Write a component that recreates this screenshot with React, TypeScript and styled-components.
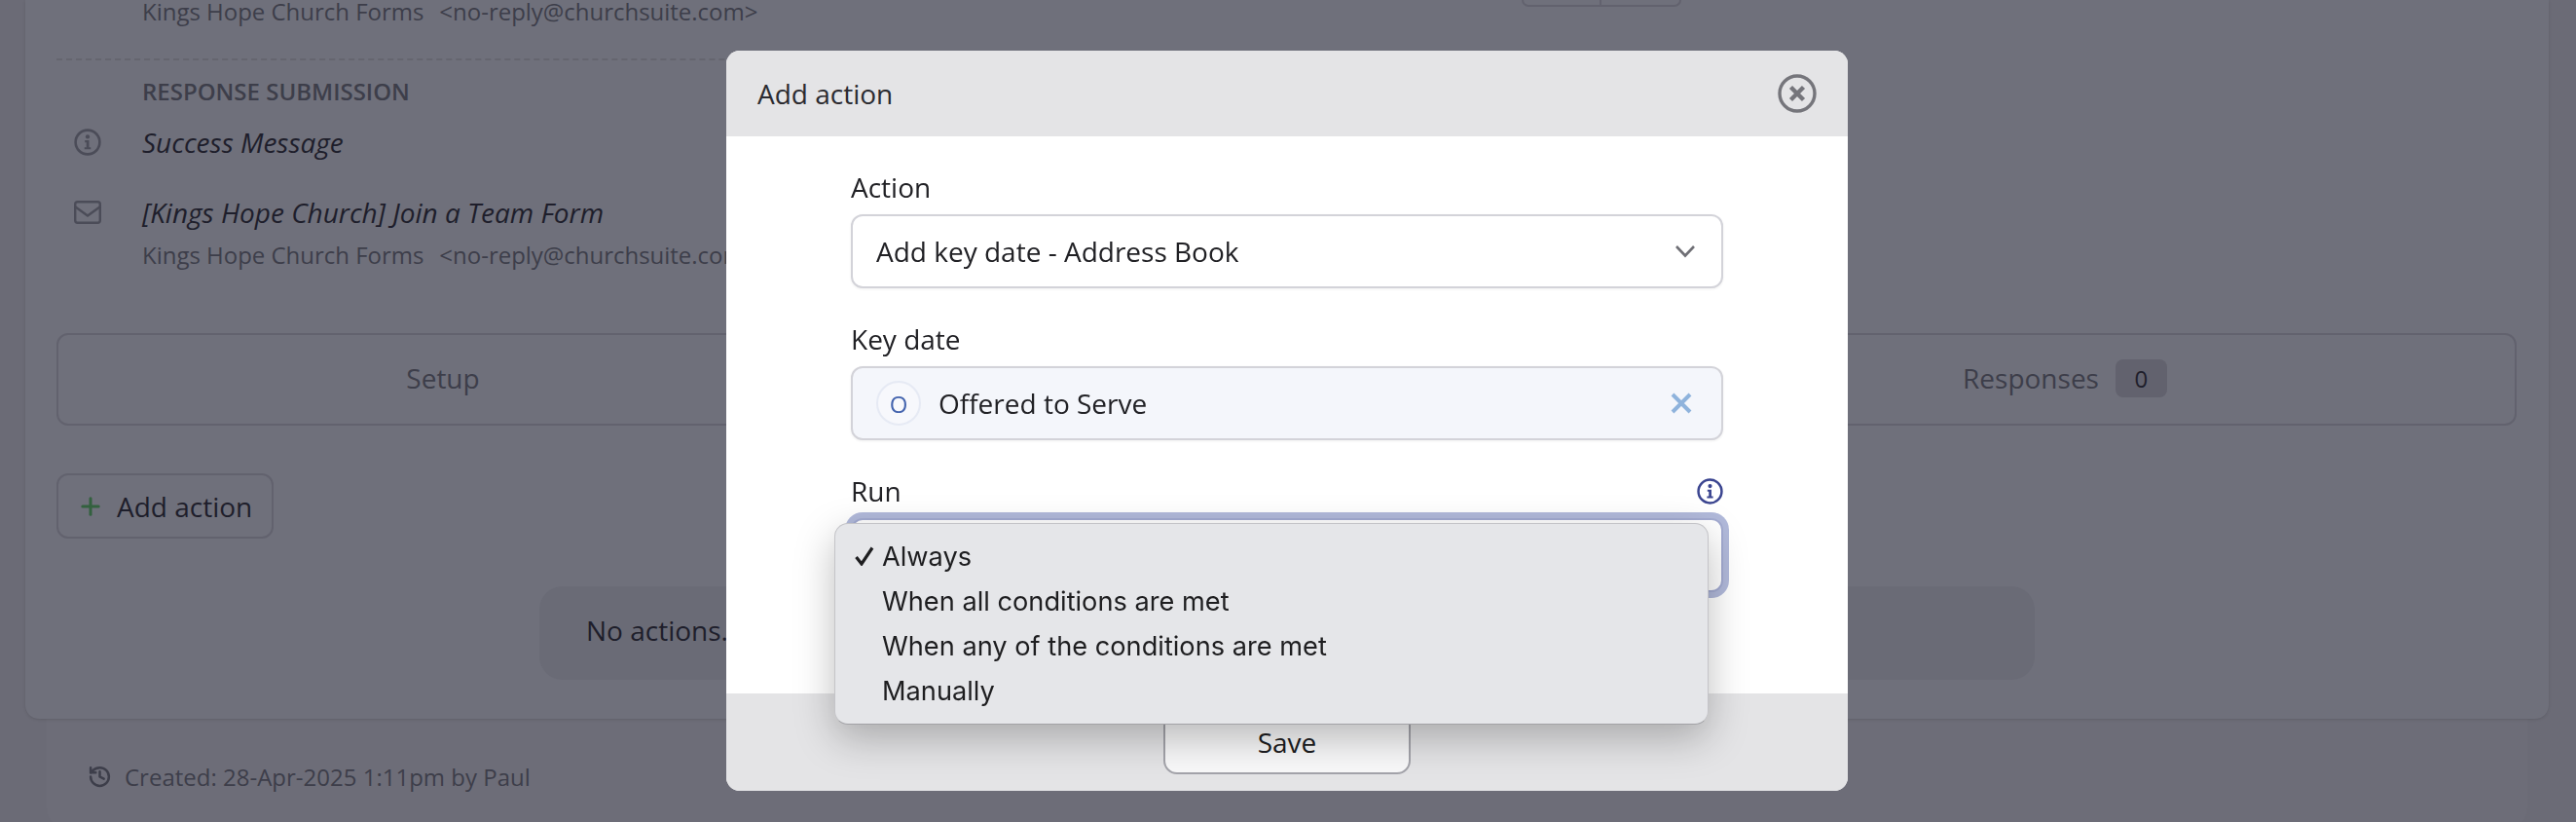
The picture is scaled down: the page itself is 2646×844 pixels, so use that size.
import React from 'react'
import styled, { createGlobalStyle } from 'styled-components'
import { History, Plus } from 'lucide-react'

const appFont = `'Open Sans', 'Noto Sans', sans-serif`
const ink = '#1e1e2b'
const inkMuted = '#3d3e4a'
const line = '#62626e'

const GlobalStyle = createGlobalStyle`
  html, body {
    margin: 0;
    height: 100%;
    overflow: hidden;
    background: #6b6b76;
    font-family: ${appFont};
  }
  * {
    box-sizing: border-box;
  }
`

const Page = styled.div`
  height: 844px;
  display: flex;
  flex-direction: column;
  overflow: hidden;
`

const Panel = styled.section`
  margin: 0 28px 0 26px;
  padding: 0 33px 40px 32px;
  background: #6f707b;
  border-radius: 0 0 14px 14px;
  box-shadow: 0 1px 3px rgba(0, 0, 0, 0.12);
  position: relative;
`

const TopRow = styled.div`
  display: flex;
  justify-content: space-between;
  padding-left: 88px;
`

const Sender = styled.div`
  font-size: 24px;
  line-height: 24px;
  color: ${inkMuted};
  white-space: nowrap;
  letter-spacing: -0.02px;
  span {
    margin-left: 16px;
  }
`

const ToggleGroup = styled.div`
  width: 164px;
  height: 7px;
  margin-right: 858px;
  display: flex;
  border: 2px solid ${line};
  border-top: 0;
  border-radius: 0 0 12px 12px;
  div:first-child {
    width: 80px;
    border-right: 2px solid ${line};
  }
`

const Divider = styled.hr`
  margin: 36px 1000px 0 0;
  border: 0;
  border-top: 2px dashed #65656f;
`

const Heading = styled.h4`
  margin: 16px 0 0 88px;
  font-size: 24px;
  line-height: 32px;
  font-weight: 600;
  color: ${inkMuted};
`

const DetailRow = styled.div<{ $top: number }>`
  margin-top: ${(p) => p.$top}px;
  display: flex;
  align-items: center;
  height: 40px;
  svg {
    margin-left: 18px;
    width: 28px;
    color: #4b4c58;
  }
`

const DetailTitle = styled.em`
  margin-left: 42px;
  font-size: 28px;
  line-height: 38px;
  color: ${ink};
`

const SubSender = styled(Sender)`
  margin: 6px 0 0 88px;
  line-height: 36px;
`

const Tabs = styled.div`
  margin-top: 62px;
  height: 95px;
  padding-bottom: 4px;
  display: grid;
  grid-template-columns: 790px 1fr 924px;
  align-items: center;
  border: 2px solid ${line};
  border-radius: 12px;
`

const Tab = styled.div`
  display: flex;
  justify-content: center;
  align-items: center;
  font-size: 28px;
  color: ${inkMuted};
`

const Count = styled.span`
  margin: 2px 0 0 17px;
  width: 53px;
  height: 39px;
  display: flex;
  align-items: center;
  justify-content: center;
  border-radius: 8px;
  background: #62626e;
  font-size: 24px;
  color: ${ink};
`

const AddButton = styled.div`
  margin-top: 49px;
  width: 223px;
  height: 67px;
  display: flex;
  align-items: center;
  gap: 13px;
  padding-left: 19px;
  border: 2px solid ${line};
  border-radius: 12px;
  font-size: 28px;
  color: ${ink};
  svg {
    color: #33613f;
  }
`

const EmptyNote = styled.div`
  margin: 49px 0 0 496px;
  width: 1536px;
  height: 96px;
  padding: 0 0 6px 48px;
  display: flex;
  align-items: center;
  border-radius: 24px;
  background: #6a6b76;
  font-size: 28px;
  color: ${ink};
`

const FooterPanel = styled.footer`
  margin: 0 50px 0 48px;
  flex: 1;
  min-height: 112px;
  padding: 44px 0 0 42px;
  display: flex;
  align-items: flex-start;
  gap: 13px;
  background: #6d6d78;
  border-radius: 0 0 20px 20px;
  font-size: 24px;
  line-height: 32px;
  color: ${inkMuted};
  svg {
    margin-top: 3px;
  }
`

const Modal = styled.div`
  position: fixed;
  left: 746px;
  top: 52px;
  width: 1152px;
  height: 760px;
  display: flex;
  flex-direction: column;
  background: #fff;
  border-radius: 14px;
`

const ModalHeader = styled.header`
  height: 88px;
  padding: 0 32px;
  display: flex;
  align-items: center;
  justify-content: space-between;
  background: #e4e4e6;
  border-radius: 14px 14px 0 0;
  font-size: 28px;
  color: #2b2b30;
`

const ModalBody = styled.div`
  flex: 1;
  padding: 34px 128px 0;
`

const Field = styled.div`
  margin-bottom: 34px;
`

const LabelRow = styled.div`
  height: 36px;
  margin-bottom: 10px;
  display: flex;
  align-items: center;
  justify-content: space-between;
  font-size: 28px;
  color: #212125;
`

const Control = styled.div<{ $tone?: 'selected' | 'focus' }>`
  position: relative;
  height: 76px;
  padding: 0 ${(p) => (p.$tone === 'selected' ? 30 : 26)}px 0 24px;
  display: flex;
  align-items: center;
  justify-content: space-between;
  background: ${(p) => (p.$tone === 'selected' ? '#f4f6fb' : '#fff')};
  border: 2px solid ${(p) => (p.$tone === 'focus' ? '#a3abd1' : '#d3d3d9')};
  border-radius: 12px;
  box-shadow: ${(p) =>
    p.$tone === 'focus'
      ? '0 0 0 6px #b1b9da'
      : '0 1px 3px rgba(0, 0, 0, 0.06)'};
  font-size: 28px;
  color: #212125;
`

const ChosenValue = styled.div`
  display: flex;
  align-items: center;
  gap: 18px;
`

const Avatar = styled.span`
  width: 46px;
  height: 46px;
  display: flex;
  align-items: center;
  justify-content: center;
  background: #f7f8fc;
  border: 2px solid #e6eaf4;
  border-radius: 50%;
  font-size: 24px;
  color: #4464ae;
`

const NativeMenu = styled.ul`
  position: absolute;
  z-index: 2;
  left: -19px;
  top: 3px;
  width: 898px;
  height: 207px;
  margin: 0;
  padding: 10px 0 0 20px;
  list-style: none;
  background: #e5e6e9;
  border: 1px solid #c4c4c8;
  border-bottom-color: #a2a2a6;
  border-radius: 14px;
  box-shadow: 0 14px 40px rgba(0, 0, 0, 0.26);
  font-family: Inter, 'Liberation Sans', sans-serif;
  font-size: 27.2px;
  color: #1e1e20;
`

const MenuItem = styled.li`
  height: 46px;
  display: flex;
  align-items: center;
`

const CheckSlot = styled.span`
  width: 28px;
  display: flex;
`

const ModalFooter = styled.div`
  height: 100px;
  padding-top: 19px;
  display: flex;
  justify-content: center;
  background: #e4e4e6;
  border-radius: 0 0 14px 14px;
`

const SaveButton = styled.div`
  width: 254px;
  height: 64px;
  padding-bottom: 2px;
  display: flex;
  align-items: center;
  justify-content: center;
  background: #f8f8f9;
  border: 2px solid #a4a4ab;
  border-radius: 14px;
  font-size: 28px;
  color: #1c1c20;
`

const CircleInfo = ({ size, color }: { size: number; color?: string }) => (
  <svg width={size} height={size} viewBox="0 0 26 26" fill="none" color={color}>
    <circle cx="13" cy="13" r="11.5" stroke="currentColor" strokeWidth="2.4" />
    <circle cx="13" cy="7.8" r="2" fill="currentColor" />
    <path
      d="M10.4 11.2h4v6.6h1.6v2h-6v-2h1.8v-4.6h-1.4z"
      fill="currentColor"
    />
  </svg>
)

const CircleClose = () => (
  <svg width="40" height="40" viewBox="0 0 40 40" fill="none" stroke="#75757b">
    <circle cx="20" cy="20" r="18" strokeWidth="3.4" />
    <path d="M13.5 13.5l13 13M26.5 13.5l-13 13" strokeWidth="4.4" />
  </svg>
)

const Envelope = () => (
  <svg width="28" height="24" viewBox="0 0 28 24" fill="none" stroke="currentColor">
    <rect x="1.2" y="1.2" width="25.6" height="21.6" rx="2.5" strokeWidth="2.4" />
    <path d="M1.5 6.5L14 15.5L26.5 6.5" strokeWidth="2.4" />
  </svg>
)

const Chevron = () => (
  <svg width="22" height="14" viewBox="0 0 22 14" fill="none" stroke="#6f6f75" strokeWidth="2.6">
    <path d="M2 2l9 9.5L20 2" />
  </svg>
)

const ClearCross = () => (
  <svg width="22" height="22" viewBox="0 0 22 22" fill="none" stroke="#8fb3dc" strokeWidth="4">
    <path d="M2 2l18 18M20 2L2 20" />
  </svg>
)

const Check = () => (
  <svg width="20" height="20" viewBox="0 0 20 20" fill="none" stroke="#1e1e20" strokeWidth="3.2">
    <path d="M1.5 11L7 18L18 1.5" />
  </svg>
)

const runOptions = [
  'Always',
  'When all conditions are met',
  'When any of the conditions are met',
  'Manually',
]

export default function App() {
  return (
    <>
      <GlobalStyle />
      <Page>
        <Panel>
          <TopRow>
            <Sender>
              Kings Hope Church Forms<span>&lt;no-reply@churchsuite.com&gt;</span>
            </Sender>
            <ToggleGroup>
              <div />
            </ToggleGroup>
          </TopRow>
          <Divider />
          <Heading>RESPONSE SUBMISSION</Heading>
          <DetailRow $top={16}>
            <CircleInfo size={28} />
            <DetailTitle>Success Message</DetailTitle>
          </DetailRow>
          <DetailRow $top={32}>
            <Envelope />
            <DetailTitle>[Kings Hope Church] Join a Team Form</DetailTitle>
          </DetailRow>
          <SubSender>
            Kings Hope Church Forms<span>&lt;no-reply@churchsuite.com&gt;</span>
          </SubSender>
          <Tabs>
            <Tab>Setup</Tab>
            <Tab />
            <Tab>
              Responses<Count>0</Count>
            </Tab>
          </Tabs>
          <AddButton>
            <Plus size={28} strokeWidth={2.6} />
            Add action
          </AddButton>
          <EmptyNote>No actions.</EmptyNote>
        </Panel>
        <FooterPanel>
          <History size={25} strokeWidth={2.4} />
          Created: 28-Apr-2025 1:11pm by Paul
        </FooterPanel>
      </Page>
      <Modal>
        <ModalHeader>
          Add action
          <CircleClose />
        </ModalHeader>
        <ModalBody>
          <Field>
            <LabelRow>Action</LabelRow>
            <Control>
              Add key date - Address Book
              <Chevron />
            </Control>
          </Field>
          <Field>
            <LabelRow>Key date</LabelRow>
            <Control $tone="selected">
              <ChosenValue>
                <Avatar>O</Avatar>
                Offered to Serve
              </ChosenValue>
              <ClearCross />
            </Control>
          </Field>
          <Field>
            <LabelRow>
              Run
              <CircleInfo size={27} color="#3b4590" />
            </LabelRow>
            <Control $tone="focus">
              <NativeMenu>
                {runOptions.map((option, i) => (
                  <MenuItem key={option}>
                    <CheckSlot>{i === 0 && <Check />}</CheckSlot>
                    {option}
                  </MenuItem>
                ))}
              </NativeMenu>
            </Control>
          </Field>
        </ModalBody>
        <ModalFooter>
          <SaveButton>Save</SaveButton>
        </ModalFooter>
      </Modal>
    </>
  )
}
